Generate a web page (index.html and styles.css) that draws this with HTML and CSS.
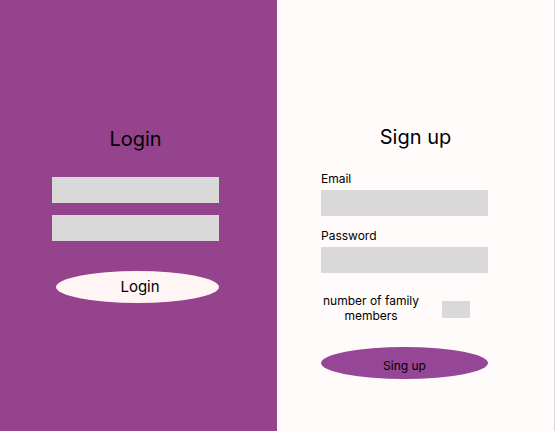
FILE: index.html
```html
<!DOCTYPE html>
<html lang="en">
<head>
<meta charset="utf-8">
<title>Login and sign up</title>
<link rel="stylesheet" href="styles.css">
</head>
<body>
<main class="page">
  <section class="panel login">
    <form class="form">
      <h1 class="title">Login</h1>
      <input class="box" type="text" aria-label="Username">
      <input class="box" type="password" aria-label="Password">
      <button class="pill login-button" type="button">Login</button>
    </form>
  </section>
  <section class="panel signup">
    <form class="form">
      <h1 class="title">Sign up</h1>
      <label class="label" for="email">Email</label>
      <input class="box" id="email" type="email">
      <label class="label" for="new-password">Password</label>
      <input class="box" id="new-password" type="password">
      <div class="family">
        <label class="family-label" for="members">number of family members</label>
        <input class="box count" id="members" type="text">
      </div>
      <button class="pill signup-button" type="button">Sing up</button>
    </form>
  </section>
</main>
</body>
</html>
```

FILE: styles.css
```css
* {
  box-sizing: border-box;
}

body {
  margin: 0;
  font-family: Inter, "Liberation Sans", sans-serif;
  color: #000;
}

.page {
  display: grid;
  grid-template-columns: 1fr 1fr;
  min-height: 100vh;
  border-right: 1px solid #dcdadc;
}

.panel {
  display: flex;
  flex-direction: column;
}

.login {
  padding: 127px 58px 40px 52px;
  background: #95438c;
}

.signup {
  padding: 125px 66px 40px 44px;
  background: #fffbfa;
}

.form {
  display: flex;
  flex-direction: column;
}

.title {
  margin: 0 0 26px;
  font-size: 20px;
  font-weight: 400;
  line-height: 24px;
  text-align: center;
}

.signup .title {
  margin-bottom: 22px;
  padding-left: 22px;
}

.box {
  width: 100%;
  height: 26px;
  padding: 0 6px;
  border: 0;
  border-radius: 0;
  background: #d9d9d9;
  font: inherit;
  font-size: 12px;
}

.login .box {
  margin-bottom: 12px;
}

.label {
  margin-bottom: 3px;
  font-size: 12px;
  line-height: 16px;
}

.signup .form > .box {
  margin-bottom: 12px;
}

.pill {
  height: 32px;
  padding: 0;
  border: 0;
  border-radius: 50%;
  color: #000;
  font-family: inherit;
}

.login-button {
  margin: 18px 0 0 4px;
  padding: 0 0 2px 5px;
  background: #fff5f4;
  font-size: 15px;
}

.family {
  display: flex;
  align-items: flex-end;
  justify-content: space-between;
  margin-top: 8px;
  padding-right: 18px;
}

.family-label {
  width: 100px;
  font-size: 12px;
  line-height: 15px;
  text-align: center;
}

.family .count {
  width: 28px;
  height: 17px;
  margin-bottom: 5px;
}

.signup-button {
  margin-top: 24px;
  padding-top: 4px;
  background: #954696;
  font-size: 12px;
}
```
